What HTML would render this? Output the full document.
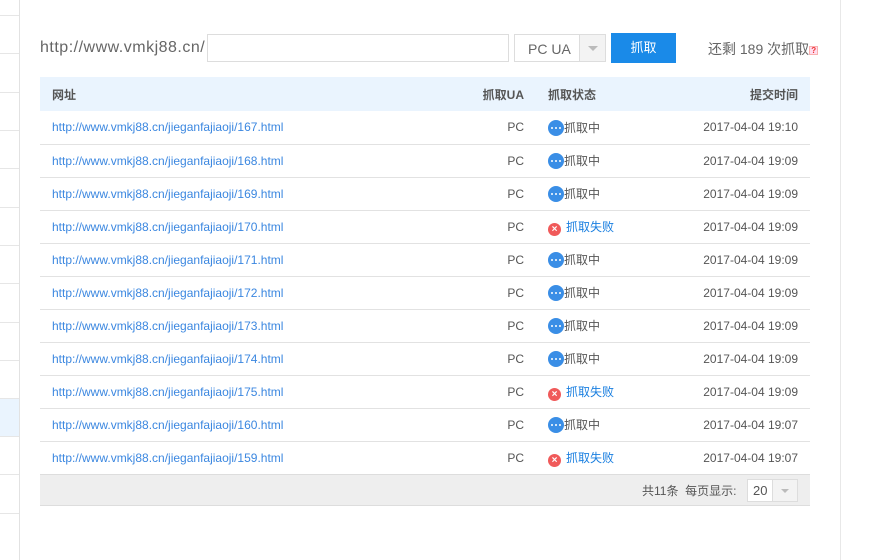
<!DOCTYPE html><html><head><meta charset="utf-8"><style>
*{margin:0;padding:0;box-sizing:border-box}
body{width:891px;height:560px;background:#fff;font-family:"Liberation Sans","Noto Sans CJK SC",sans-serif;position:relative;overflow:hidden;color:#555}
.side{position:absolute;left:0;top:0;width:20px;height:560px;border-right:1px solid #e2e2e2;background:#fff}
.side div{position:absolute;left:0;width:19px;border-top:1px solid #e6e6e6}
.rline{position:absolute;left:840px;top:0;width:1px;height:560px;background:#e8e8e8}
.a{position:absolute}
table{position:absolute;left:40px;top:77px;width:770px;border-collapse:collapse;font-size:12px;table-layout:fixed}
th{height:34px;background:#eaf4fe;font-weight:bold;color:#555;font-size:12px}
td{height:33px;border-bottom:1px solid #e2e2e2;color:#555;white-space:nowrap}
a{color:#3b87e0;text-decoration:none}
.ic{display:inline-block;width:16px;height:16px;border-radius:50%;background:#3a8ee6;vertical-align:-4px;position:relative}
.ic i{position:absolute;top:7px;width:2px;height:2px;background:#fff;border-radius:1px}
.x{display:inline-block;width:13px;height:13px;border-radius:50%;background:#f05a5a;color:#fff;font-size:10px;line-height:13px;text-align:center;vertical-align:-1px;margin:0 5px 0 0;font-weight:bold}
.f{color:#1a7fe0}
</style></head><body>
<div class="side">
<div style="top:15px"></div><div style="top:53px"></div><div style="top:92px"></div><div style="top:130px"></div><div style="top:168px"></div><div style="top:207px"></div><div style="top:245px"></div><div style="top:283px"></div><div style="top:322px"></div><div style="top:360px"></div><div style="top:398px;height:38px;background:#eaf4fe"></div><div style="top:436px"></div><div style="top:474px"></div><div style="top:513px"></div>
</div>
<div class="rline"></div>
<div class="a" style="left:40px;top:39px;font-size:16px;letter-spacing:0.5px;color:#666;white-space:nowrap">http://www.vmkj88.cn/</div>
<div class="a" style="left:207px;top:34px;width:302px;height:28px;border:1px solid #ddd"></div>
<div class="a" style="left:514px;top:34px;width:92px;height:28px;border:1px solid #ddd;font-size:14px;color:#666;padding:6px 0 0 13px">PC UA<div style="position:absolute;left:64px;top:0;width:26px;height:26px;background:#f3f3f3;border-left:1px solid #ddd"><div style="position:absolute;left:8px;top:11px;border:5px solid transparent;border-top-color:#bbb"></div></div></div>
<div class="a" style="left:611px;top:33px;width:65px;height:30px;background:#1a8ae8;color:#fff;font-size:13px;text-align:center;line-height:30px">抓取</div>
<div class="a" style="left:708px;top:39px;font-size:14px;color:#666;white-space:nowrap">还剩 189 次抓取<span style="display:inline-block;width:9px;height:9px;border:1px solid #f9b0b0;background:#fde;color:#e33;font-size:8px;line-height:8px;text-align:center;vertical-align:1px;font-weight:bold">?</span></div>
<table>
<colgroup><col style="width:404px"><col style="width:80px"><col style="width:130px"><col style="width:156px"></colgroup>
<tr><th style="text-align:left;padding-left:12px">网址</th><th style="text-align:right">抓取UA</th><th style="text-align:left;padding-left:24px">抓取状态</th><th style="text-align:right;padding-right:12px">提交时间</th></tr>
<tr><td style="padding-left:12px"><a>http://www.vmkj88.cn/jieganfajiaoji/167.html</a></td><td style="text-align:right">PC</td><td style="padding-left:24px"><span class="ic"><i style="left:3px"></i><i style="left:7px"></i><i style="left:11px"></i></span>抓取中</td><td style="text-align:right;padding-right:12px">2017-04-04 19:10</td></tr>
<tr><td style="padding-left:12px"><a>http://www.vmkj88.cn/jieganfajiaoji/168.html</a></td><td style="text-align:right">PC</td><td style="padding-left:24px"><span class="ic"><i style="left:3px"></i><i style="left:7px"></i><i style="left:11px"></i></span>抓取中</td><td style="text-align:right;padding-right:12px">2017-04-04 19:09</td></tr>
<tr><td style="padding-left:12px"><a>http://www.vmkj88.cn/jieganfajiaoji/169.html</a></td><td style="text-align:right">PC</td><td style="padding-left:24px"><span class="ic"><i style="left:3px"></i><i style="left:7px"></i><i style="left:11px"></i></span>抓取中</td><td style="text-align:right;padding-right:12px">2017-04-04 19:09</td></tr>
<tr><td style="padding-left:12px"><a>http://www.vmkj88.cn/jieganfajiaoji/170.html</a></td><td style="text-align:right">PC</td><td style="padding-left:24px"><span class="x">×</span><span class="f">抓取失败</span></td><td style="text-align:right;padding-right:12px">2017-04-04 19:09</td></tr>
<tr><td style="padding-left:12px"><a>http://www.vmkj88.cn/jieganfajiaoji/171.html</a></td><td style="text-align:right">PC</td><td style="padding-left:24px"><span class="ic"><i style="left:3px"></i><i style="left:7px"></i><i style="left:11px"></i></span>抓取中</td><td style="text-align:right;padding-right:12px">2017-04-04 19:09</td></tr>
<tr><td style="padding-left:12px"><a>http://www.vmkj88.cn/jieganfajiaoji/172.html</a></td><td style="text-align:right">PC</td><td style="padding-left:24px"><span class="ic"><i style="left:3px"></i><i style="left:7px"></i><i style="left:11px"></i></span>抓取中</td><td style="text-align:right;padding-right:12px">2017-04-04 19:09</td></tr>
<tr><td style="padding-left:12px"><a>http://www.vmkj88.cn/jieganfajiaoji/173.html</a></td><td style="text-align:right">PC</td><td style="padding-left:24px"><span class="ic"><i style="left:3px"></i><i style="left:7px"></i><i style="left:11px"></i></span>抓取中</td><td style="text-align:right;padding-right:12px">2017-04-04 19:09</td></tr>
<tr><td style="padding-left:12px"><a>http://www.vmkj88.cn/jieganfajiaoji/174.html</a></td><td style="text-align:right">PC</td><td style="padding-left:24px"><span class="ic"><i style="left:3px"></i><i style="left:7px"></i><i style="left:11px"></i></span>抓取中</td><td style="text-align:right;padding-right:12px">2017-04-04 19:09</td></tr>
<tr><td style="padding-left:12px"><a>http://www.vmkj88.cn/jieganfajiaoji/175.html</a></td><td style="text-align:right">PC</td><td style="padding-left:24px"><span class="x">×</span><span class="f">抓取失败</span></td><td style="text-align:right;padding-right:12px">2017-04-04 19:09</td></tr>
<tr><td style="padding-left:12px"><a>http://www.vmkj88.cn/jieganfajiaoji/160.html</a></td><td style="text-align:right">PC</td><td style="padding-left:24px"><span class="ic"><i style="left:3px"></i><i style="left:7px"></i><i style="left:11px"></i></span>抓取中</td><td style="text-align:right;padding-right:12px">2017-04-04 19:07</td></tr>
<tr><td style="padding-left:12px;border-bottom:none"><a>http://www.vmkj88.cn/jieganfajiaoji/159.html</a></td><td style="text-align:right;border-bottom:none">PC</td><td style="padding-left:24px;border-bottom:none"><span class="x">×</span><span class="f">抓取失败</span></td><td style="text-align:right;padding-right:12px;border-bottom:none">2017-04-04 19:07</td></tr>
</table>
<div class="a" style="left:40px;top:474px;width:770px;height:32px;background:#eee;border-top:1px solid #ddd;border-bottom:1px solid #ddd;font-size:12px;color:#555">
<span style="position:absolute;left:602px;top:7px;white-space:nowrap">共11条&nbsp; 每页显示:</span>
<div style="position:absolute;left:707px;top:4px;width:51px;height:23px;background:#fff;border:1px solid #ddd;font-size:13px;padding:3px 0 0 5px">20<div style="position:absolute;left:24px;top:0;width:25px;height:21px;background:#f3f3f3;border-left:1px solid #ddd"><div style="position:absolute;left:8px;top:9px;border:4px solid transparent;border-top-color:#bbb"></div></div></div>
</div>
</body></html>
